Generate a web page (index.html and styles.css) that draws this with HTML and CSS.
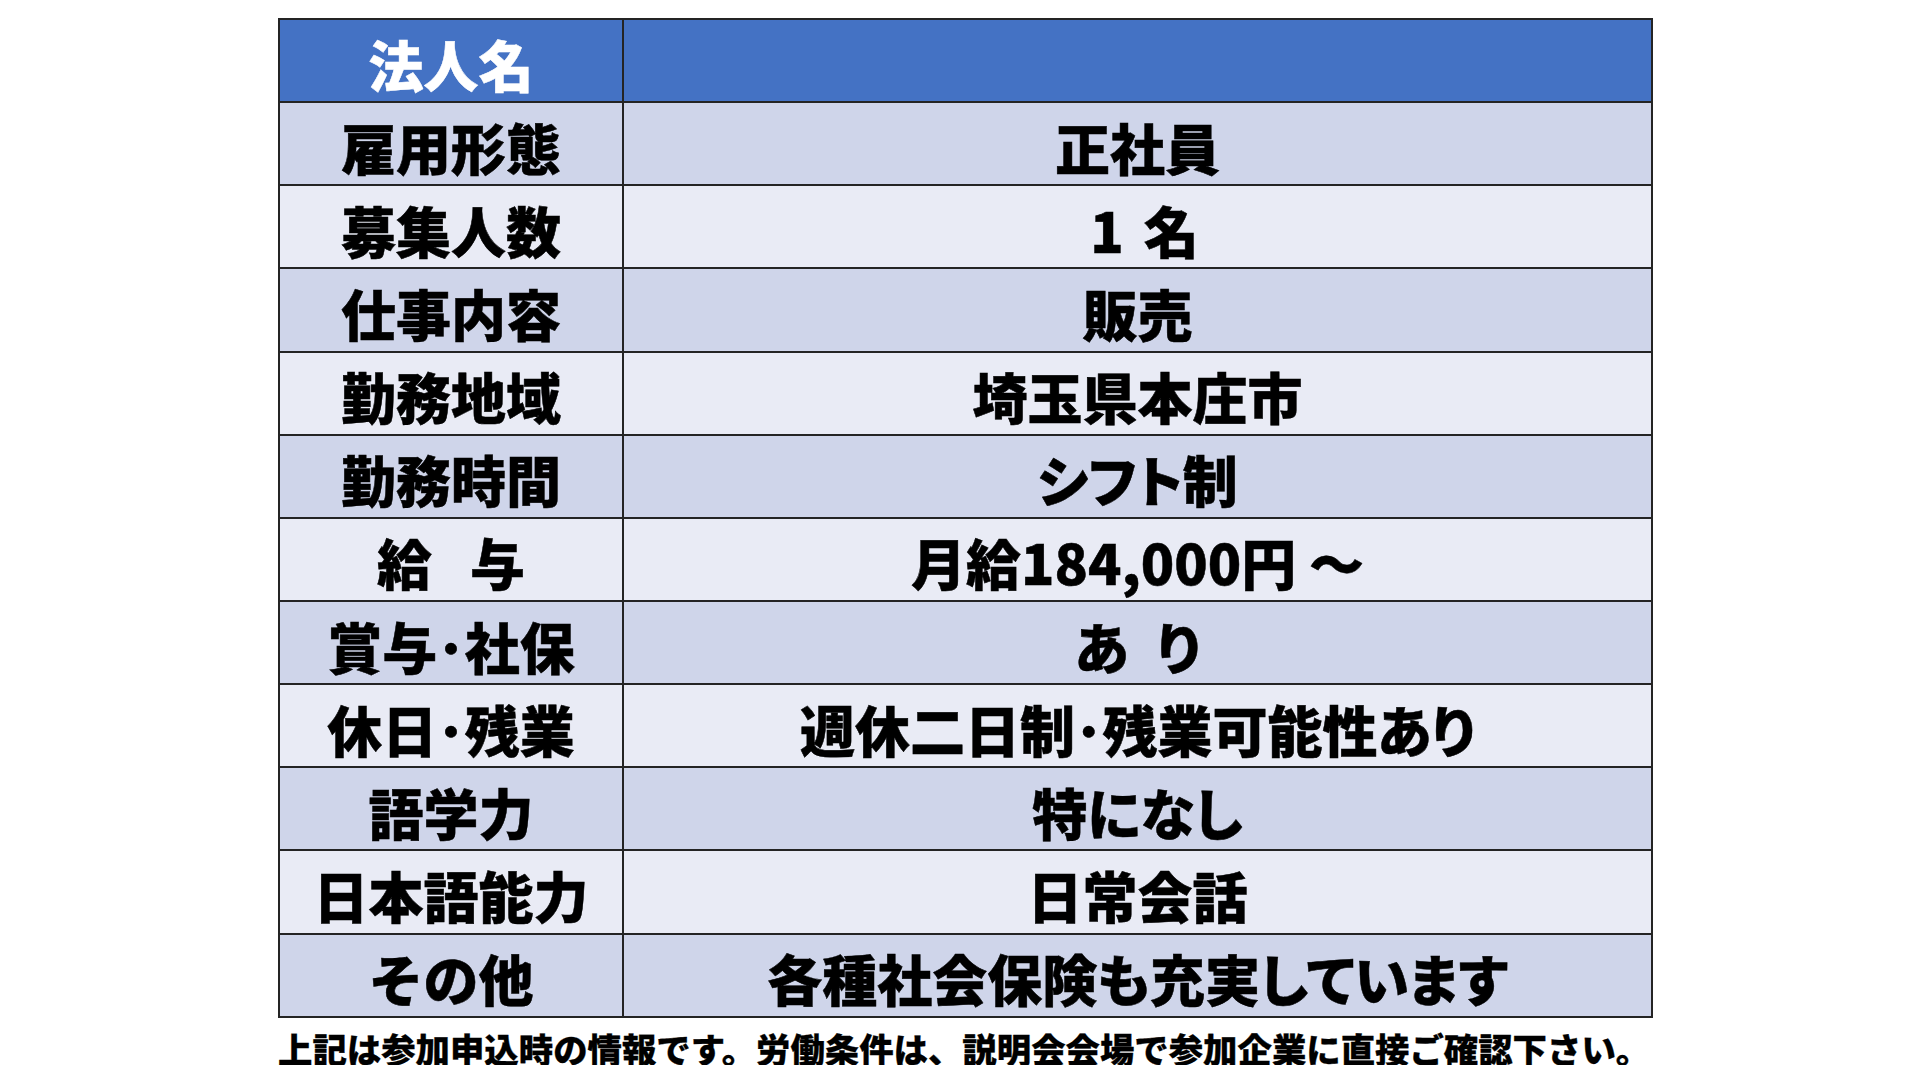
FILE: index.html
```html
<!DOCTYPE html>
<html lang="ja">
<head>
<meta charset="utf-8">
<title>求人情報</title>
<link rel="stylesheet" href="styles.css">
</head>
<body>
<div class="page">
  <div class="sheet">
    <div class="cell head">法人名</div><div class="cell head"></div>
    <div class="cell dark">雇用形態</div><div class="cell dark val">正社員</div>
    <div class="cell light">募集人数</div><div class="cell light val"><span class="shift">1<span class="gap-s"></span>名</span></div>
    <div class="cell dark">仕事内容</div><div class="cell dark val">販売</div>
    <div class="cell light">勤務地域</div><div class="cell light val">埼玉県本庄市</div>
    <div class="cell dark">勤務時間</div><div class="cell dark val">シフト制</div>
    <div class="cell light">給<span class="gap"></span>与</div><div class="cell light val">月給184,000円 ～</div>
    <div class="cell dark">賞与･社保</div><div class="cell dark val">あ<span class="gap-m"></span>り</div>
    <div class="cell light">休日･残業</div><div class="cell light val">週休二日制･残業可能性あり</div>
    <div class="cell dark">語学力</div><div class="cell dark val">特になし</div>
    <div class="cell light">日本語能力</div><div class="cell light val">日常会話</div>
    <div class="cell dark">その他</div><div class="cell dark val">各種社会保険も充実しています</div>
  </div>
  <p class="note">上記は参加申込時の情報です。労働条件は、説明会会場で参加企業に直接ご確認下さい。</p>
</div>
</body>
</html>
```

FILE: styles.css
```css
html, body {
  margin: 0;
  padding: 0;
  background: #ffffff;
}

body {
  font-family: "Noto Sans CJK JP", "Noto Sans", sans-serif;
  color: #000000;
}

.page {
  padding: 18px 0 0 278px;
}

.sheet {
  width: 1371px;
  display: grid;
  grid-template-columns: 342px 1027px;
  grid-template-rows: repeat(12, 81.15px);
  gap: 2px;
  border: 2px solid #242424;
  background: #242424;
}

.cell {
  display: flex;
  align-items: center;
  justify-content: center;
  padding-top: 5px;
  box-sizing: border-box;
  font-size: 55px;
  font-weight: 900;
  line-height: 1;
  white-space: nowrap;
  -webkit-text-stroke: 0.5px currentColor;
}

.val {
  font-feature-settings: "palt";
}

.head {
  background: #4472c4;
  color: #ffffff;
}

.dark {
  background: #cfd5ea;
}

.light {
  background: #e9ebf5;
}

.gap {
  display: inline-block;
  width: 38px;
}

.gap-s {
  display: inline-block;
  width: 20px;
}

.gap-m {
  display: inline-block;
  width: 28px;
}

.shift {
  padding-left: 14px;
}

.note {
  margin: 13px 0 0 0;
  font-size: 34.4px;
  font-weight: 900;
  line-height: 1;
  white-space: nowrap;
  -webkit-text-stroke: 0.3px currentColor;
}
```
